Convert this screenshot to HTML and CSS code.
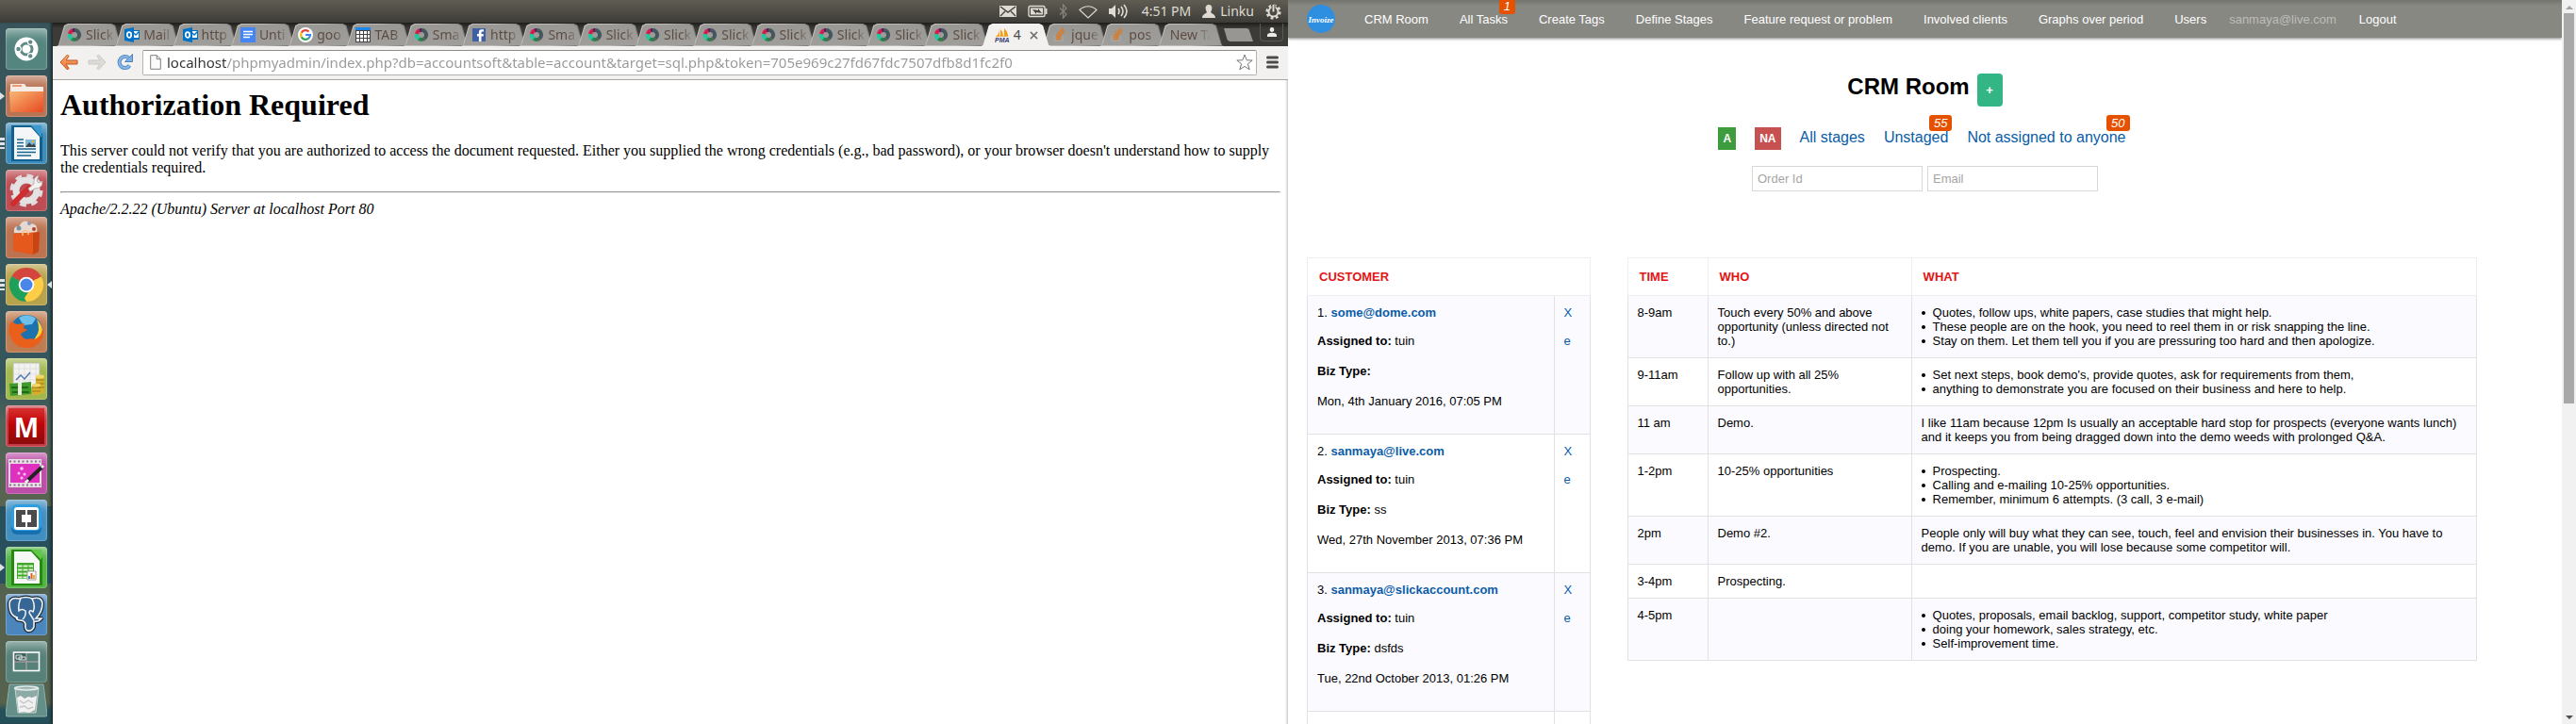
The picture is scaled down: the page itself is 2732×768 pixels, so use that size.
FILE: index.html
```html
<!DOCTYPE html>
<html lang="en">
<head>
<meta charset="utf-8">
<title>CRM Room</title>
<link rel="stylesheet" href="styles.css">
</head>
<body>
<svg class="defs" aria-hidden="true">
  <symbol id="donut" viewBox="0 0 16 16"><g fill="none" stroke-width="4"><path d="M8 3a5 5 0 0 1 3 9" stroke="#44565e"/><path d="M11 12a5 5 0 0 1-3 1" stroke="#4a6a50"/><path d="M8 13a5 5 0 0 1-3-1" stroke="#1b8a4b"/><path d="M5 12a5 5 0 0 1-2-5" stroke="#1cc9a0"/><path d="M3 7a5 5 0 0 1 3-3.600" stroke="#d81b4a"/><path d="M6 3.400a5 5 0 0 1 2-.4" stroke="#5a1560"/></g></symbol>
  <symbol id="outlook" viewBox="0 0 16 16"><path d="M9 3h7v10H9z" fill="#0072c6"/><path d="M10 4h5v7h-5z" fill="#fff"/><path d="M10 6l2 2 4-4" fill="none" stroke="#0072c6" stroke-width="1.300"/><path d="M0 2l10-2v16L0 14z" fill="#0072c6"/><ellipse cx="5" cy="8" rx="2.200" ry="2.800" fill="none" stroke="#fff" stroke-width="1.700"/></symbol>
  <symbol id="stack" viewBox="0 0 16 16"><path d="M2 9v5h9V9" fill="none" stroke="#aaa6a2" stroke-width="1.300"/><path d="M4 12.500h5M4 10l5 .8M4.500 7.400l5 1.900M6 4.800l4.300 3.200M8.300 2.500l3 4.400M11 .8l1.300 5" stroke="#e0781e" stroke-width="1.500"/></symbol>
  <linearGradient id="orange" x1="0" y1="0" x2="1" y2="1"><stop offset="0" stop-color="#f8b878"/><stop offset="1" stop-color="#e8481c"/></linearGradient>
  <linearGradient id="arrow" x1="0" y1="0" x2="0" y2="1"><stop offset="0" stop-color="#f8b070"/><stop offset="1" stop-color="#ec7030"/></linearGradient>
</svg>

<section class="desktop" aria-label="Desktop">
  <header class="panel">
    <svg width="18" height="14" viewBox="0 0 18 14"><path d="M0 1h18v12H0z" fill="#dfdbd2"/><path d="M1 2l8 6 8-6M1 12l5-5M17 12l-5-5" fill="none" stroke="#454440" stroke-width="1.400"/></svg>
    <svg width="21" height="14" viewBox="0 0 21 14" class="gap-a"><rect x="1" y="1.500" width="17" height="11" rx="1.500" fill="none" stroke="#dfdbd2" stroke-width="1.400"/><path d="M3 3.500h13v7H3z" fill="#dfdbd2"/><path d="M19.500 4v6" stroke="#dfdbd2" stroke-width="2"/><path d="M5 5l6 1 0-2 4 5-6-1v2z" fill="#454440"/></svg>
    <svg width="9" height="16" viewBox="0 0 9 16" class="gap-a"><path d="M1 4.500l7 6.500-3.500 4V1L8 5l-7 6.500" fill="none" stroke="#85837c" stroke-width="1.300"/></svg>
    <svg width="20" height="15" viewBox="0 0 20 15" class="gap-a"><path d="M1 5.500C6 .5 14 .5 19 5.500L10 14z" fill="none" stroke="#dfdbd2" stroke-width="1.200"/></svg>
    <svg width="21" height="16" viewBox="0 0 21 16" class="gap-a"><path d="M0 5h3l4-4v14l-4-4H0z" fill="#dfdbd2"/><path d="M10 5q2 3 0 6M13 3q4 5 0 10M16 1q6 7 0 14" fill="none" stroke="#dfdbd2" stroke-width="1.600"/></svg>
    <time class="panel-text">4:51 PM</time>
    <svg width="14" height="14" viewBox="0 0 14 14"><path d="M7 0c2.600 0 3.600 1.800 3.400 4-.1 2-1.200 2.800-1.200 4 0 1.500 4.800 1.500 4.800 6H0c0-4.500 4.800-4.500 4.800-6 0-1.200-1.100-2-1.200-4C3.400 1.800 4.400 0 7 0z" fill="#dfdbd2"/></svg>
    <span class="panel-user">Linku</span>
    <svg width="17" height="17" viewBox="0 0 17 17"><circle cx="8.500" cy="8.500" r="6.800" fill="none" stroke="#dfdbd2" stroke-width="2.600" stroke-dasharray="2.800 2.540"/><circle cx="8.500" cy="8.500" r="5" fill="none" stroke="#dfdbd2" stroke-width="2"/><path d="M8.500 1v8" stroke="#454440" stroke-width="4"/><path d="M8.500 1v7.500" stroke="#dfdbd2" stroke-width="2"/></svg>
  </header>

  <nav class="launcher" aria-label="Launcher">
    <button class="tile tile-dash" aria-label="Dash"><svg viewBox="0 0 44 44"><circle cx="22" cy="22" r="12.500" fill="#fff"/><circle cx="22" cy="22" r="6" fill="none" stroke="#5f8a86" stroke-width="3"/><g fill="#5f8a86" stroke="#fff" stroke-width="1.200"><circle cx="13.500" cy="22" r="2.800"/><circle cx="26.200" cy="14.600" r="2.800"/><circle cx="26.200" cy="29.400" r="2.800"/></g></svg></button>
    <button class="tile tile-files pip" aria-label="Files"><svg viewBox="0 0 44 44"><path d="M5 10q0-1 1-1h14l2 3h17q1 0 1 1v6H5z" fill="#f6ece6"/><path d="M7 10h10v2H7z" fill="#f0986a"/><path d="M4 17h36.500l-1 21q0 1-1 1H6q-1 0-1-1z" fill="url(#orange)"/></svg></button>
    <button class="tile tile-writer pips" aria-label="Writer"><svg viewBox="0 0 44 44"><path d="M6 3h24l9 9v29H6z" fill="#12608f"/><path d="M9 5h18l9 10v24H9z" fill="#f4f6f7"/><path d="M27 3h11v13z" fill="#3a9ad0"/><path d="M12 18h7M12 21.500h7M12 25h7M12 28h20M12 31.500h20M12 35h15" stroke="#14648f" stroke-width="1.700"/><path d="M21 18h11v8H21z" fill="#7cb8dc"/><path d="M21 26l4-5 3 3 2-2 2 4z" fill="#37474c"/><circle cx="29" cy="20" r="1.300" fill="#f5b030"/></svg></button>
    <button class="tile tile-settings" aria-label="System Settings"><svg viewBox="0 0 44 44"><circle cx="22" cy="22" r="15" fill="none" stroke="#dedcdc" stroke-width="5" stroke-dasharray="6.500 5.280"/><circle cx="22" cy="22" r="11" fill="none" stroke="#e4e2e2" stroke-width="7"/><path d="M8 36L25 19" stroke="#cf2c30" stroke-width="6" stroke-linecap="round"/><path d="M24 20l6-5q-1-7 5-9l-2 6 2 2 4-2q0 8-8 8l-5 3z" fill="#f5f3f2" stroke="#b4b0ae"/></svg></button>
    <button class="tile tile-software" aria-label="Software Center"><svg viewBox="0 0 44 44"><path d="M9 17q-1-8 5-7 6-9 11-3 10-1 8 10z" fill="#e8d8cf"/><circle cx="14" cy="12" r="2.500" fill="#7592a6"/><circle cx="25" cy="7" r="2" fill="#889ab5"/><circle cx="30" cy="13" r="2" fill="#b24328"/><path d="M8 18l28-2-1 21-7 3-20-4z" fill="#e5591c"/><path d="M29 17l7-1-1 21-6 3z" fill="#c94414"/><path d="M18 20v-4q3-3 6 0v3" fill="none" stroke="#ffc08c" stroke-width="1.500"/></svg></button>
    <button class="tile tile-chrome pips active" aria-label="Chrome"><svg viewBox="0 0 44 44"><path d="M22 22L6.400 13A18 18 0 0 1 37.600 13z" fill="#d4453e"/><path d="M22 22L6.400 13A18 18 0 0 0 22 40z" fill="#1fa05a"/><path d="M22 22L37.600 13A18 18 0 0 1 22 40z" fill="#fccd45"/><path d="M22 13h16l-5 3z" fill="#d4453e"/><path d="M14 26l8 14 8-14z" fill="#fccd45"/><path d="M14 26l4 13 6-9z" fill="#1fa05a"/><circle cx="22" cy="22" r="8.300" fill="#fff"/><circle cx="22" cy="22" r="6.500" fill="#4a86ea"/></svg></button>
    <button class="tile tile-firefox" aria-label="Firefox"><svg viewBox="0 0 44 44"><circle cx="22" cy="21" r="17" fill="#1c72ae"/><path d="M14 7q9-6 18 1l-4 6-9 1z" fill="#6cc0ea"/><path d="M33 9q10 10 3 22-6 8-17 8l12-10q7-9 2-20z" fill="#fbd232"/><path d="M6 11l6 3 8-1-1 5 4 2-7 4q3 8 11 5 5 2 8-2 3-2 4-8 3 6-2 13-6 8-15 7-13 0-17-12Q1 21 6 11z" fill="#e8601c"/></svg></button>
    <button class="tile tile-money" aria-label="Money"><svg viewBox="0 0 44 44"><path d="M8 5h28v26H8z" fill="#f2f2f0" stroke="#b5b8a8"/><path d="M8 11h28M8 17h28M8 23h28M14 5v26M20 5v26M26 5v26M32 5v26" stroke="#dcdcda" stroke-width=".8"/><path d="M11 23l5-5 4 4 6-7" fill="none" stroke="#5578b0" stroke-width="1.500"/><path d="M4 27l23-2v13l-22 2z" fill="#3f9a2c"/><path d="M6 31h18M7 36h18" stroke="#226915" stroke-width="2"/><path d="M13 26h4v13h-4z" fill="#e8ecd9"/><path d="M32 19h9v18h-9zM28 28h9v11h-9z" fill="#d6b02c"/><path d="M32 23h9M32 27h9M32 31h9M28 31h9M28 35h9" stroke="#9b7b16"/><ellipse cx="36.500" cy="19.500" rx="4.500" ry="2" fill="#f0d768"/><ellipse cx="32.500" cy="28.500" rx="4.500" ry="2" fill="#f0d768"/></svg></button>
    <button class="tile tile-m" aria-label="M"><span class="m-face">M</span></button>
    <button class="tile tile-video" aria-label="Video Editor"><svg viewBox="0 0 44 44"><path d="M3 7h35v30H3z" fill="#e8dfe6"/><path d="M5 12h31v20H5z" fill="#e030c0"/><path d="M4 9.500h33M4 34.500h33" stroke="#8a7387" stroke-width="2" stroke-dasharray="2 2.500"/><circle cx="17" cy="17" r="1.800" fill="#ffc8f4"/><circle cx="14" cy="22" r="1.500" fill="#ffc8f4"/><circle cx="20" cy="23" r="1.500" fill="#ffc8f4"/><circle cx="17" cy="27" r="1.500" fill="#ffc8f4"/><path d="M22 31L39 15" stroke="#222" stroke-width="4"/><path d="M21 32l3-3M38 16l2-2" stroke="#eee" stroke-width="3"/></svg></button>
    <button class="tile tile-brackets" aria-label="Brackets"><svg viewBox="0 0 44 44"><rect x="6" y="6" width="32" height="31" rx="6" fill="#1670b0"/><rect x="6" y="5" width="32" height="28" rx="6" fill="#2c9fe0"/><rect x="9" y="8" width="26" height="24" rx="3" fill="#fff"/><path d="M11 11h10v5h-4v8h4v5H11zM33 11H23v5h4v8h-4v5h10z" fill="#4b4b4d"/></svg></button>
    <button class="tile tile-calc pip" aria-label="Calc"><svg viewBox="0 0 44 44"><path d="M6 3h24l9 9v29H6z" fill="#258a10"/><path d="M9 5h18l9 10v24H9z" fill="#f6f8f5"/><path d="M27 3h11v11z" fill="#62c748"/><path d="M12 17h18v17H12z" fill="#3faa2a"/><path d="M13 20.500h16M13 24.500h16M13 28.500h16M13 32.500h16" stroke="#dff2d8" stroke-width="2.200"/><path d="M18 17v17M24 17v17" stroke="#3faa2a"/><path d="M23 26h9v9h-9z" fill="#fff" stroke="#888" stroke-width=".8"/><path d="M24 31h2v3h-2z" fill="#3a7cc0"/><path d="M26.500 28h2v6h-2z" fill="#e05a20"/><path d="M29 30h2v4h-2z" fill="#efae20"/></svg></button>
    <button class="tile tile-pg" aria-label="pgAdmin"><svg viewBox="0 0 44 44"><path d="M13 25Q4 24 4 10 5 3 14 5q8-3 14 0 10-3 11 5 0 9-7 16h6q-3 4-8 3v6q-2 5-7 4-3-2-2-7-1-4-6-4-3 0-4-3z" fill="#366694" stroke="#1e2a36" stroke-width="4" stroke-linejoin="round"/><path d="M13 25Q4 24 4 10 5 3 14 5q8-3 14 0 10-3 11 5 0 9-7 16h6q-3 4-8 3v6q-2 5-7 4-3-2-2-7-1-4-6-4-3 0-4-3z" fill="#366694" stroke="#f0f3f5" stroke-width="1.600"/><path d="M16 5q-3 6-2 13 3-3 7 0 1 5-3 9M28 5q4 8 1 14-4-3-4 1l5 8" fill="none" stroke="#f0f3f5" stroke-width="1.500"/></svg></button>
    <button class="tile tile-work" aria-label="Workspace Switcher"><svg viewBox="0 0 44 44"><path d="M9 12h13v10H9z" fill="#3f5f5a"/><path d="M22 12v20M9 22h26" stroke="#bfa8ac"/><rect x="8.500" y="12" width="27" height="19.500" fill="none" stroke="#fff" stroke-width="1.600"/><path d="M11 15h6v4h-6zM14 17h7v3h-7z" fill="#3f5f5a" stroke="#dde5e3"/></svg></button>
    <button class="tile tile-trash" aria-label="Trash"><svg viewBox="0 0 44 36"><path d="M4 1h36l4 32q0 2-2 2H2q-2 0-2-2z" fill="#648f89" stroke="#8fb0ab"/><path d="M10 5h25l-3 26H13z" fill="#d9e0de" fill-opacity=".35" stroke="#c8d4d2"/><ellipse cx="22" cy="5" rx="12.500" ry="2" fill="none" stroke="#e6ecea" stroke-width="1.600"/><path d="M12 15l4-2 4 3 4-2 4 1 5-2-2 15-6 3-6-1-5 1z" fill="#f0f1f0"/><path d="M15 18l4 3 5-3 5 3M15 25l5-1 4 3 5-2" fill="none" stroke="#c2c5c4" stroke-width="1.400"/></svg></button>
  </nav>

  <div class="browser">
    <div class="tabstrip">
      <div class="tabs">
        <button class="tab"><span class="face"></span><svg class="fav"><use href="#donut"/></svg><span class="label">Slick</span></button>
        <button class="tab"><span class="face"></span><svg class="fav"><use href="#outlook"/></svg><span class="label">Mail</span></button>
        <button class="tab"><span class="face"></span><svg class="fav"><use href="#outlook"/></svg><span class="label">http</span></button>
        <button class="tab"><span class="face"></span><svg class="fav" viewBox="0 0 16 16"><path d="M0 0h16v16H0z" fill="#4285f4"/><path d="M3 4.500h10M3 7.500h10M3 10.500h7" stroke="#fff" stroke-width="1.300"/></svg><span class="label">Unti</span></button>
        <button class="tab"><span class="face"></span><svg class="fav" viewBox="0 0 16 16"><circle cx="8" cy="8" r="8" fill="#fff"/><g fill="none" stroke-width="2.200"><path d="M11.500 4.500A5 5 0 0 0 3.700 5.600" stroke="#ea4335"/><path d="M3.700 5.600a5 5 0 0 0 0 4.800" stroke="#fbbc05"/><path d="M3.700 10.400a5 5 0 0 0 7.600 1.300" stroke="#34a853"/><path d="M11.300 11.700A5 5 0 0 0 13 8H8" stroke="#4285f4"/></g></svg><span class="label">goo</span></button>
        <button class="tab"><span class="face"></span><svg class="fav" viewBox="0 0 16 16"><path d="M0 0h16v16H0z" fill="#444"/><path d="M0 0h16v3H0z" fill="#1c86ea"/><path d="M1 4h3v3H1zM5 4h3v3H5zM9 4h3v3H9zM13 4h2v3h-2zM1 8h3v3H1zM5 8h3v3H5zM9 8h3v3H9zM13 8h2v3h-2zM1 12h3v3H1zM5 12h3v3H5zM9 12h3v3H9zM13 12h2v3h-2z" fill="#fff"/></svg><span class="label">TAB</span></button>
        <button class="tab"><span class="face"></span><svg class="fav"><use href="#donut"/></svg><span class="label">Sma</span></button>
        <button class="tab"><span class="face"></span><svg class="fav" viewBox="0 0 16 16"><path d="M1 1h14v14H1z" fill="#4060a5"/><path d="M10.500 15V9.500h2.200V7h-2.200V5.500q0-1 1-1h1.500V2.300h-2.500q-2.600 0-2.600 2.700v2H6v2.500h1.900V15z" fill="#fff"/></svg><span class="label">http</span></button>
        <button class="tab"><span class="face"></span><svg class="fav"><use href="#donut"/></svg><span class="label">Sma</span></button>
        <button class="tab"><span class="face"></span><svg class="fav"><use href="#donut"/></svg><span class="label">Slick</span></button>
        <button class="tab"><span class="face"></span><svg class="fav"><use href="#donut"/></svg><span class="label">Slick</span></button>
        <button class="tab"><span class="face"></span><svg class="fav"><use href="#donut"/></svg><span class="label">Slick</span></button>
        <button class="tab"><span class="face"></span><svg class="fav"><use href="#donut"/></svg><span class="label">Slick</span></button>
        <button class="tab"><span class="face"></span><svg class="fav"><use href="#donut"/></svg><span class="label">Slick</span></button>
        <button class="tab"><span class="face"></span><svg class="fav"><use href="#donut"/></svg><span class="label">Slick</span></button>
        <button class="tab"><span class="face"></span><svg class="fav"><use href="#donut"/></svg><span class="label">Slick</span></button>
        <button class="tab current"><span class="face"></span><svg class="fav" viewBox="0 0 16 16"><path d="M2 9q3-2 3-8v8zM6 9V2q3 3 3 7zM10 9V1q4 4 4 8z" fill="#f89c0e"/><path d="M1 9.500h13" stroke="#f0b050"/><text x="0" y="16" class="pma">PMA</text></svg><span class="num">4</span><svg class="close" viewBox="0 0 10 10"><path d="M1 1l8 8M9 1L1 9" stroke="#77756f" stroke-width="1.800"/></svg></button>
        <button class="tab"><span class="face"></span><svg class="fav"><use href="#stack"/></svg><span class="label">jque</span></button>
        <button class="tab"><span class="face"></span><svg class="fav"><use href="#stack"/></svg><span class="label">pos</span></button>
        <button class="tab"><span class="face"></span><span class="label wide">New Ta</span></button>
      </div>
      <button class="newtab" aria-label="New tab"></button>
      <button class="profile" aria-label="Profile"><svg width="10" height="10" viewBox="0 0 10 10"><path d="M5 0a2.300 2.300 0 0 1 2.300 2.300C7.300 4 6.400 5 5 5S2.700 4 2.700 2.300A2.300 2.300 0 0 1 5 0zM0 10V8q0-2 5-2.300Q10 6 10 8v2z" fill="#eceae6"/></svg></button>
    </div>
    <div class="toolbar">
      <button class="tool" aria-label="Back"><svg width="20" height="18" viewBox="0 0 20 18"><path d="M8.500 1L1 9l7.500 8L10 15.500 7 11h12V7H7l3-4.500z" fill="url(#arrow)" stroke="#c0561c" stroke-linejoin="round"/></svg></button>
      <button class="tool" aria-label="Forward"><svg width="20" height="18" viewBox="0 0 20 18"><path d="M11.500 1L19 9l-7.500 8L10 15.500l3-4.500H1V7h12l-3-4.500z" fill="#dddbd8" stroke="#cac8c5" stroke-linejoin="round"/></svg></button>
      <button class="tool" aria-label="Reload"><svg width="18" height="18" viewBox="0 0 18 18"><path d="M14.500 12.500a6 6 0 1 1-1-8" fill="none" stroke="#4f83bf" stroke-width="4"/><path d="M17.500.5v8h-8z" fill="#7fb0e4" stroke="#4f83bf"/><path d="M14.500 12.500a6 6 0 1 1-1-8" fill="none" stroke="#86b5e6" stroke-width="2.400"/></svg></button>
      <div class="omnibox">
        <svg width="12" height="16" viewBox="0 0 12 16"><path d="M.7.700h6.600l4 4v10.600H.7z" fill="#fbfbfb" stroke="#7f7f7f"/><path d="M7.300.7v4h4" fill="none" stroke="#7f7f7f"/></svg>
        <input class="url" type="text" aria-label="Address" value="localhost/phpmyadmin/index.php?db=accountsoft&amp;table=account&amp;target=sql.php&amp;token=705e969c27fd67fdc7507dfb8d1fc2f0">
        <svg width="18" height="18" viewBox="0 0 18 18"><path d="M9 1l2.200 5.800 6 .2-4.800 3.800 1.800 6L9 13.400 3.800 16.800l1.800-6L.8 7l6-.2z" fill="#fff" stroke="#777" stroke-linejoin="round"/></svg>
      </div>
      <button class="tool" aria-label="Menu"><svg width="13" height="14" viewBox="0 0 13 14"><path d="M1.500 2h10M1.500 7h10M1.500 12h10" stroke="#4b4a46" stroke-width="3" stroke-linecap="round"/></svg></button>
    </div>
    <article class="page">
      <h1>Authorization Required</h1>
      <p>This server could not verify that you are authorized to access the document requested. Either you supplied the wrong credentials (e.g., bad password), or your browser doesn't understand how to supply the credentials required.</p>
      <hr>
      <address>Apache/2.2.22 (Ubuntu) Server at localhost Port 80</address>
    </article>
  </div>
</section>

<section class="crm" aria-label="CRM">
  <div class="crm-view">
    <nav class="crm-nav">
      <a class="logo" href="#" aria-label="Invoize"><svg width="30" height="30" viewBox="0 0 30 30"><circle cx="15" cy="15" r="15" fill="#2e8fe0"/><text x="15" y="19" text-anchor="middle" class="logo-text">Invoize</text></svg></a>
      <div class="links">
        <a href="#">CRM Room</a>
        <a href="#" class="has-badge">All Tasks<span class="badge">1</span></a>
        <a href="#">Create Tags</a>
        <a href="#">Define Stages</a>
        <a href="#">Feature request or problem</a>
        <a href="#">Involved clients</a>
        <a href="#">Graphs over period</a>
        <a href="#">Users</a>
      </div>
      <span class="account">sanmaya@live.com</span>
      <a href="#">Logout</a>
    </nav>
    <main class="crm-main">
      <div class="heading"><h2>CRM Room</h2><button class="add" aria-label="Add customer">+</button></div>
      <div class="filters">
        <a href="#" class="chip chip-a">A</a>
        <a href="#" class="chip chip-na">NA</a>
        <a href="#">All stages</a>
        <a href="#" class="has-badge">Unstaged<span class="badge">55</span></a>
        <a href="#" class="has-badge">Not assigned to anyone<span class="badge">50</span></a>
      </div>
      <form class="search">
        <input type="text" placeholder="Order Id" aria-label="Order Id">
        <input type="text" placeholder="Email" aria-label="Email">
      </form>
      <div class="tables">
        <table class="grid customers">
          <thead><tr><th colspan="2">CUSTOMER</th></tr></thead>
          <tbody>
            <tr>
              <td><p class="who">1. <a href="#">some@dome.com</a></p><p><b>Assigned to:</b> tuin</p><p><b>Biz Type:</b></p><p>Mon, 4th January 2016, 07:05 PM</p></td>
              <td class="acts"><a href="#">X</a><a href="#">e</a></td>
            </tr>
            <tr>
              <td><p class="who">2. <a href="#">sanmaya@live.com</a></p><p><b>Assigned to:</b> tuin</p><p><b>Biz Type:</b> ss</p><p>Wed, 27th November 2013, 07:36 PM</p></td>
              <td class="acts"><a href="#">X</a><a href="#">e</a></td>
            </tr>
            <tr>
              <td><p class="who">3. <a href="#">sanmaya@slickaccount.com</a></p><p><b>Assigned to:</b> tuin</p><p><b>Biz Type:</b> dsfds</p><p>Tue, 22nd October 2013, 01:26 PM</p></td>
              <td class="acts"><a href="#">X</a><a href="#">e</a></td>
            </tr>
            <tr><td></td><td class="acts"></td></tr>
          </tbody>
        </table>
        <table class="grid schedule">
          <thead><tr><th class="c-time">TIME</th><th class="c-who">WHO</th><th>WHAT</th></tr></thead>
          <tbody>
            <tr><td>8-9am</td><td>Touch every 50% and above opportunity (unless directed not to.)</td><td><ul><li>Quotes, follow ups, white papers, case studies that might help.</li><li>These people are on the hook, you need to reel them in or risk snapping the line.</li><li>Stay on them. Let them tell you if you are pressuring too hard and then apologize.</li></ul></td></tr>
            <tr><td>9-11am</td><td>Follow up with all 25% opportunities.</td><td><ul><li>Set next steps, book demo's, provide quotes, ask for requirements from them,</li><li>anything to demonstrate you are focused on their business and here to help.</li></ul></td></tr>
            <tr><td>11 am</td><td>Demo.</td><td>I like 11am because 12pm Is usually an acceptable hard stop for prospects (everyone wants lunch) and it keeps you from being dragged down into the demo weeds with prolonged Q&amp;A.</td></tr>
            <tr><td>1-2pm</td><td>10-25% opportunities</td><td><ul><li>Prospecting.</li><li>Calling and e-mailing 10-25% opportunities.</li><li>Remember, minimum 6 attempts. (3 call, 3 e-mail)</li></ul></td></tr>
            <tr><td>2pm</td><td>Demo #2.</td><td>People only will buy what they can see, touch, feel and envision their businesses in. You have to demo. If you are unable, you will lose because some competitor will.</td></tr>
            <tr><td>3-4pm</td><td>Prospecting.</td><td></td></tr>
            <tr><td>4-5pm</td><td></td><td><ul><li>Quotes, proposals, email backlog, support, competitor study, white paper</li><li>doing your homework, sales strategy, etc.</li><li>Self-improvement time.</li></ul></td></tr>
          </tbody>
        </table>
      </div>
    </main>
  </div>
  <div class="scrollbar" aria-hidden="true">
    <svg class="sb-arrow" viewBox="0 0 15 14"><path d="M4 10h8L8 6z" fill="#a3a3a3"/></svg>
    <div class="sb-track"><div class="sb-thumb"></div></div>
    <svg class="sb-arrow" viewBox="0 0 15 14"><path d="M4 5h8L8 9z" fill="#505050"/></svg>
  </div>
</section>
</body>
</html>
```
FILE: styles.css
```css
* { box-sizing: border-box; }
body {
  margin: 0;
  height: 100vh;
  overflow: hidden;
  display: grid;
  grid-template-columns: 1fr 1fr;
  background: #fff;
  font: 13px/15px "Liberation Sans", Arial, sans-serif;
  color: #000;
}
.defs { position: absolute; width: 0; height: 0; }
button { border: 0; padding: 0; background: none; font: inherit; color: inherit; }
svg { display: block; flex: none; }

/* Desktop */
.desktop {
  display: grid;
  grid-template: 24px 1fr / 56px 1fr;
  min-width: 0;
  min-height: 0;
  overflow: hidden;
}
.panel {
  grid-column: 1 / 3;
  display: flex;
  align-items: center;
  justify-content: flex-end;
  padding-right: 7px;
  background: linear-gradient(#5f5d53, #3d3b37);
  color: #dfdbd2;
  font: 14px/24px "Noto Sans", sans-serif;
}
.gap-a { margin-left: 12px; }
.panel-text { margin: 0 12px 0 14px; }
.panel-user { margin: 0 12px 0 5px; }

.launcher {
  display: flex;
  flex-direction: column;
  align-items: center;
  gap: 6px;
  padding-top: 6px;
  overflow: hidden;
  box-shadow: inset -3px 0 3px -1px #1c2c2e;
  background: linear-gradient(#39545b 0, #36595e 30%, #35555b 52%, #4f6358 57%, #596450 69%, #27505c 69%, #29515d 80%, #53614f 80%, #56624c 97%, #24505a 98%);
}
.tile {
  position: relative;
  flex: none;
  width: 44px;
  height: 44px;
  border-radius: 4px;
  box-shadow: inset 0 0 0 1px rgba(255, 255, 255, .2), inset 0 12px 12px -8px rgba(255, 255, 255, .55);
}
.tile svg { width: 100%; height: 100%; }
.tile-dash { background: #55857f; }
.tile-files { background: #b97455; }
.tile-writer { background: #3d8cba; }
.tile-settings { background: #bd4d54; }
.tile-software { background: #bd7250; }
.tile-chrome { background: #b8a24c; }
.tile-firefox { background: #bf7c52; }
.tile-money { background: #a2b84c; }
.tile-m { background: #c43a46; padding: 3px; }
.tile-video { background: #bb4ea6; }
.tile-brackets { background: #418fc0; }
.tile-calc { background: #52b444; }
.tile-pg { background: #4a86bd; }
.tile-work { background: #568179; }
.tile-trash { height: 36px; margin-top: -5px; box-shadow: none; }
.m-face {
  display: block;
  height: 100%;
  background: linear-gradient(#d83030, #c00404 45%, #8a0c0c);
  color: #fff;
  font: bold 28px/40px "Open Sans", sans-serif;
}
.pip::before, .pips::before, .active::after {
  content: "";
  position: absolute;
  top: 18px;
  left: -6px;
  width: 5px;
  height: 8px;
  background: #dfe3e3;
  clip-path: polygon(0 0, 100% 50%, 0 100%);
}
.pips::before {
  top: 16px;
  height: 12px;
  clip-path: none;
  background: repeating-linear-gradient(#dfe3e3 0 3px, transparent 3px 5px);
}
.active::after { left: auto; right: -5px; clip-path: polygon(100% 0, 0 50%, 100% 100%); }

/* Browser window */
.browser { display: flex; flex-direction: column; min-width: 0; background: #fff; }
.tabstrip {
  display: flex;
  align-items: center;
  height: 25px;
  padding: 1px 5px 0 4px;
  background: linear-gradient(#1e1d1b, #3c3b37 6px);
}
.tabs { display: flex; flex: 1; align-self: stretch; min-width: 0; }
.tab {
  position: relative;
  display: flex;
  flex: 1 1 0;
  align-items: center;
  gap: 4px;
  min-width: 0;
  padding-left: 11px;
  color: #5b4a40;
  font: 14px/22px "Noto Sans", sans-serif;
}
.face, .face::before { position: absolute; inset: 0 -9px 0 0; clip-path: polygon(0 100%, 2px 95%, 8px 8%, 12px 0, calc(100% - 12px) 0, calc(100% - 8px) 8%, calc(100% - 2px) 95%, 100% 100%); }
.face { background: linear-gradient(90deg, #c3c1bd, #bdbbb7 50%, #6b6965); }
.face::before { content: ""; inset: 1px; background: linear-gradient(#9a9894, #a09e9a); }
.current { z-index: 1; padding-left: 14px; }
.current .face, .current .face::before { background: #f2f1f0; }
.current .face::before { inset: 0; }
.fav { position: relative; width: 16px; height: 16px; }
.label {
  position: relative;
  flex: 1;
  min-width: 0;
  margin-right: -5px;
  white-space: nowrap;
  text-align: left;
  color: transparent;
  background: linear-gradient(90deg, #5b4a40 55%, #9d9b97 90%);
  background-clip: text;
}
.wide { margin: 0 0 0 2px; }
.num { position: relative; color: #4c4a46; }
.close { position: relative; width: 9px; height: 9px; margin-left: 5px; }
.pma { font: italic bold 7px "Liberation Sans", sans-serif; fill: #3a3870; }
.newtab {
  width: 31px;
  height: 14px;
  margin-left: 9px;
  background: #989692;
  clip-path: polygon(0 0, 80% 0, 86% 10%, 100% 100%, 20% 100%, 12% 90%);
}
.profile {
  align-self: flex-start;
  display: grid;
  place-items: center;
  width: 25px;
  height: 19px;
  margin-left: 7px;
  border: 1px solid #5c5a55;
  border-top: 0;
  border-radius: 0 0 4px 4px;
}
.toolbar {
  display: flex;
  align-items: center;
  gap: 10px;
  height: 36px;
  padding: 0 10px 1px 7px;
  background: #f2f1f0;
  border-bottom: 1px solid #a9a7a4;
}
.omnibox {
  display: flex;
  flex: 1;
  align-items: center;
  gap: 6px;
  height: 27px;
  padding: 0 3px 0 7px;
  border: 1px solid #b5b3b0;
  border-top-color: #8e8c89;
  border-radius: 2px;
  background: #fff;
}
.url {
  flex: 1;
  min-width: 0;
  height: 24px;
  padding: 0;
  border: 0;
  outline: 0;
  background: linear-gradient(90deg, #333 63px, #999 63px);
  background-clip: text;
  -webkit-text-fill-color: transparent;
  font: 15px "Noto Sans", sans-serif;
}
.page {
  flex: 1;
  padding: 8px;
  font: 16px/18px "Liberation Serif", "Times New Roman", serif;
  box-shadow: inset -3px 0 3px -2px #bbb;
}
.page h1 { margin: 0 0 21px; font-size: 32px; line-height: 37px; }
.page p { margin: 0 0 16px; }
.page hr { margin: 0 0 8px; border: 1px solid #999; border-right-color: #eee; border-bottom-color: #eee; }

/* CRM window */
.crm { display: flex; min-width: 0; min-height: 0; overflow: hidden; }
.crm-view { flex: 1; min-width: 0; overflow: hidden; }
.crm a { color: #0a5ca8; text-decoration: none; }
.crm-nav {
  display: flex;
  align-items: center;
  height: 40px;
  padding-left: 20px;
  background: linear-gradient(#74746f, #888883 6px);
  box-shadow: 0 1px 3px rgba(0, 0, 0, .5);
  white-space: nowrap;
}
.crm .crm-nav a { color: #fff; }
.logo-text { font: italic bold 9px "Liberation Serif", serif; fill: #fff; }
.links { display: flex; gap: 33px; margin-left: 31px; }
.account { margin: 0 24px; color: #bdbdb9; }
.has-badge { position: relative; }
.badge {
  position: absolute;
  top: -15px;
  right: -4px;
  padding: 1px 5px;
  border-radius: 3px;
  background: #e65100;
  color: #fff;
  font: italic 13px/15px "Liberation Sans", Arial, sans-serif;
}
.crm-nav .badge { right: -8px; }
.crm-main { padding: 38px 90px 0 20px; }
.heading, .filters, .search { display: flex; justify-content: center; margin-right: -70px; }
.heading { align-items: baseline; gap: 8px; }
.heading h2 { margin: 0; font-size: 24px; line-height: 28px; }
.add {
  width: 27px;
  padding: 10px 0;
  border-radius: 4px;
  background: #34b585;
  color: #fff;
  font-weight: bold;
}
.filters { align-items: baseline; gap: 20px; margin-top: 22px; padding-right: 6px; font-size: 16px; line-height: 18px; }
.crm .chip { padding: 5px; color: #fff; font: bold 12px/14px "Liberation Sans", Arial, sans-serif; }
.chip-a { background: #3d9c3d; }
.chip-na { background: #c75050; }
.search { gap: 5px; margin-top: 17px; }
.search input {
  width: 181px;
  height: 27px;
  padding: 0 5px;
  border: 1px solid #d8d8d8;
  font: 13px "Liberation Sans", Arial, sans-serif;
}
.search input::placeholder { color: #a5a5a5; opacity: 1; }
.tables { display: grid; grid-template-columns: 1fr 3fr; gap: 39px; align-items: start; margin-top: 70px; }
.grid { width: 100%; border-collapse: collapse; }
.schedule { table-layout: fixed; }
.grid th { padding: 12px; border: 1px solid #eee; color: #e31414; text-align: left; }
.grid td { padding: 10px; border: 1px solid #e2e2e4; vertical-align: top; }
.grid tbody tr:nth-child(odd) { background: #fafaff; }
.customers td:empty { height: 147px; }
.customers p { margin: 0 0 17px; }
.customers .who { margin-bottom: 15px; }
.who a { font-weight: bold; }
.acts { width: 38px; }
.acts a { display: block; margin-bottom: 15px; }
.c-time { width: 85px; }
.c-who { width: 24%; }
.grid ul { margin: 0; padding: 0; list-style: none; }
.grid li { display: flex; align-items: center; gap: 8px; }
.grid li::before { content: ""; width: 4px; height: 4px; border-radius: 2px; background: #000; }

.scrollbar { display: flex; flex-direction: column; width: 15px; background: #f1f1f1; }
.sb-arrow { width: 15px; height: 14px; }
.sb-track { flex: 1; padding: 0 2px; }
.sb-thumb { height: 56%; background: #a8a8a8; }
```
